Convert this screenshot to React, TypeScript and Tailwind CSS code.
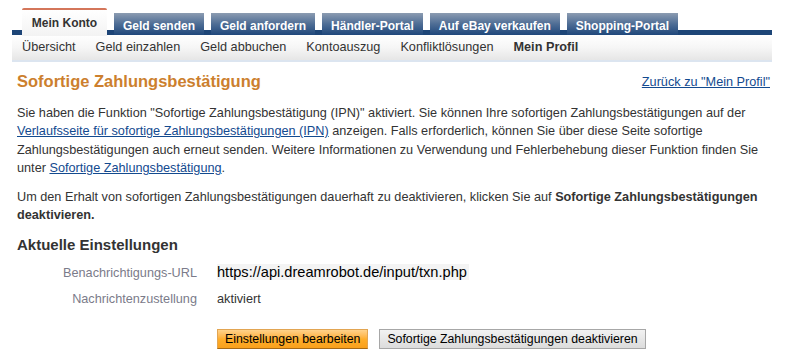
const tabs = ["Geld senden", "Geld anfordern", "Händler-Portal", "Auf eBay verkaufen", "Shopping-Portal"];
const subnav = ["Übersicht", "Geld einzahlen", "Geld abbuchen", "Kontoauszug", "Konfliktlösungen"];

const App = () => {
  return (
    <div className="w-[794px] h-[364px] bg-white text-[12.7px] text-[#333] overflow-hidden" style={{ fontFamily: '"Liberation Sans", Arial, sans-serif' }}>
      <div className="ml-[12px] w-[760px] pt-[8px]">
        {/* tabs */}
        <div className="relative h-[27px]">
          <div className="absolute left-0 right-0 bottom-0 h-[5px] bg-[#1d4577]" />
          <div className="relative flex items-end h-full pl-[10px] gap-[7px] text-[12px]">
            <div className="h-[28px] -mb-[1px] w-[85px] justify-center flex items-center font-bold text-[#333] bg-gradient-to-b from-white to-[#f3f3f3] border-t-2 border-[#d4765a] rounded-t-[2px]">
              Mein Konto
            </div>
            {tabs.map((t) => (
              <div key={t} className="h-[22px] px-[9px] flex items-center pt-[4px] font-bold text-white bg-gradient-to-b from-[#8c9cb1] via-[#4e6d95] to-[#1f487b]">
                {t}
              </div>
            ))}
          </div>
        </div>
        {/* subnav */}
        <div className="h-[27px] flex items-center pl-[10px] gap-[20px] bg-gradient-to-b from-white via-[#f6f6f6] to-[#e6e6e6] border-b-2 border-[#dce5f0] text-[#333]">
          {subnav.map((s) => (
            <span key={s}>{s}</span>
          ))}
          <span className="font-bold">Mein Profil</span>
        </div>
      </div>

      <div className="px-[17px] pr-[26px]">
        <div className="flex items-end justify-between mt-[7px]">
          <h1 className="text-[16.5px] font-bold text-[#cc7f2e]">Sofortige Zahlungsbestätigung</h1>
          <a className="text-[#134a8f] underline mb-[2px] mr-[-2px]">Zurück zu "Mein Profil"</a>
        </div>

        <p className="mt-[10px] leading-[18.5px]">
          Sie haben die Funktion "Sofortige Zahlungsbestätigung (IPN)" aktiviert. Sie können Ihre sofortigen Zahlungsbestätigungen auf der{" "}
          <a className="text-[#134a8f] underline">Verlaufsseite für sofortige Zahlungsbestätigungen (IPN)</a> anzeigen. Falls erforderlich, können Sie über diese Seite sofortige Zahlungsbestätigungen auch erneut senden. Weitere Informationen zu Verwendung und Fehlerbehebung dieser Funktion finden Sie unter{" "}
          <a className="text-[#134a8f] underline">Sofortige Zahlungsbestätigung</a>.
        </p>

        <p className="mt-[10px] leading-[18.5px] pr-[10px]">
          Um den Erhalt von sofortigen Zahlungsbestätigungen dauerhaft zu deaktivieren, klicken Sie auf{" "}
          <b>Sofortige Zahlungsbestätigungen deaktivieren.</b>
        </p>

        <h2 className="mt-[9px] text-[15px] font-bold text-[#333]">Aktuelle Einstellungen</h2>

        <div className="mt-[6px] grid grid-cols-[180px_1fr] gap-x-[20px] gap-y-[6px] items-center">
          <div className="text-right text-[#7b7b8a]">Benachrichtigungs-URL</div>
          <div>
            <span className="bg-[#f4f4f4] text-black text-[14.6px] pr-[2px]">https://api.dreamrobot.de/input/txn.php</span>
          </div>
          <div className="text-right text-[#7b7b8a]">Nachrichtenzustellung</div>
          <div className="text-[#333]">aktiviert</div>
        </div>

        <div className="mt-[20px] ml-[200px] flex gap-[11px]">
          <button className="h-[20px] px-[7px] text-[12.3px] text-black bg-gradient-to-b from-[#ffd28a] via-[#ffae2a] to-[#f9a01c] border border-[#e2a552] border-b-[#a86a14] leading-none">
            Einstellungen bearbeiten
          </button>
          <button className="h-[20px] px-[7px] text-[12.3px] text-black bg-gradient-to-b from-[#f2f2f2] to-[#dcdcdc] border border-[#a7a7a7] leading-none">
            Sofortige Zahlungsbestätigungen deaktivieren
          </button>
        </div>
      </div>
    </div>
  );
};

export default App;
